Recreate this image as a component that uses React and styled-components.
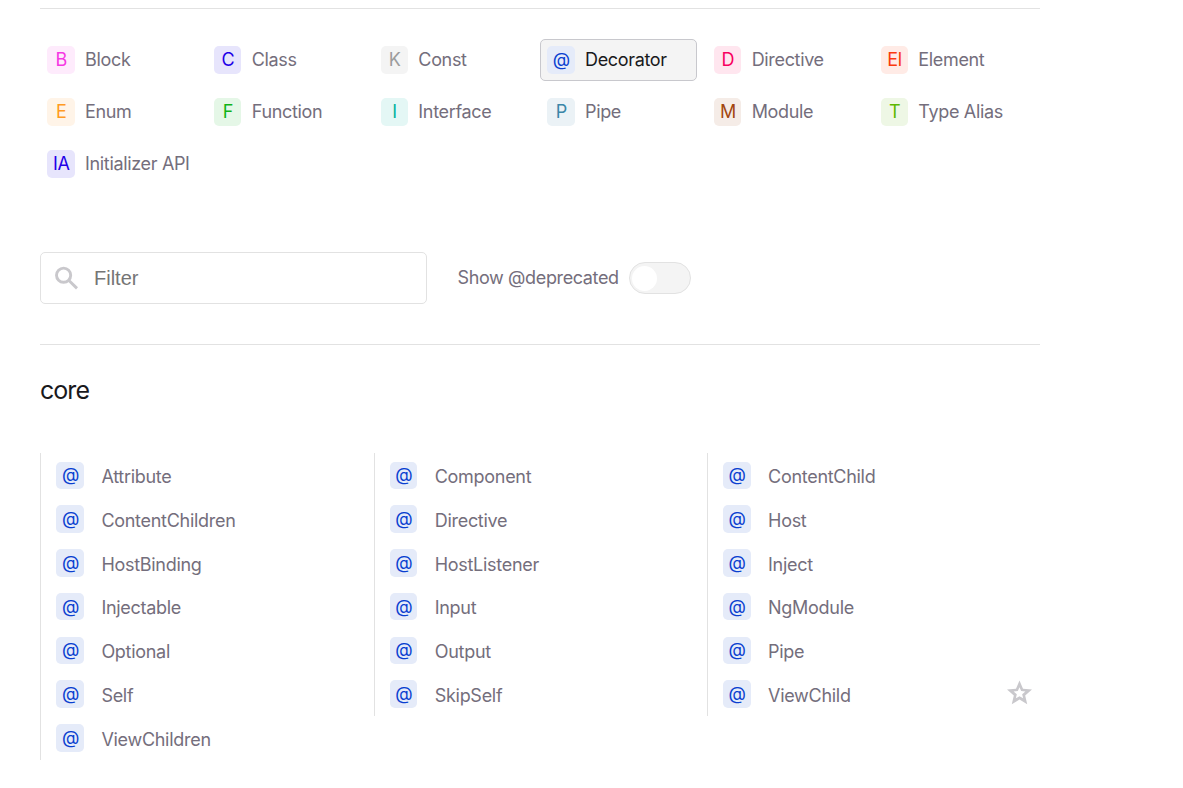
import React from 'react';
import styled, { createGlobalStyle } from 'styled-components';

const GlobalStyle = createGlobalStyle`
  * { box-sizing: border-box; }
  body {
    margin: 0;
    background: #fff;
    color: #746e7c;
    font-family: Inter, sans-serif;
    font-size: 18px;
    line-height: 24px;
    letter-spacing: -0.29px;
  }
`;

const Page = styled.main`
  width: 1000px;
  height: 788px;
  margin-left: 40px;
  padding-top: 8px;
`;

const Filters = styled.section`
  border: solid #e2e2e2;
  border-width: 1px 0;
  padding: 30px 0 40px;
`;

const TypeGrid = styled.ul`
  list-style: none;
  margin: 0 0 67px;
  padding: 0;
  display: grid;
  grid-template-columns: repeat(6, 156.67px);
  gap: 10px;
`;

const TypeItem = styled.li`
  display: flex;
  align-items: center;
  gap: 10.3px;
  height: 42px;
  padding: 0 6.25px;
  border: 1px solid ${(p) => (p.$active ? '#c8c8cd' : 'transparent')};
  border-radius: 5px;
  background: ${(p) => (p.$active ? '#f4f4f4' : 'transparent')};
  color: ${(p) => (p.$active ? '#19191c' : 'inherit')};
  letter-spacing: -0.34px;
  white-space: nowrap;
`;

const Badge = styled.span`
  display: flex;
  flex: none;
  align-items: center;
  justify-content: center;
  width: 27.5px;
  height: 27.5px;
  padding-left: 0.6px;
  border-radius: 5px;
  color: ${(p) => p.$color};
  background: ${(p) => p.$bg};
`;

const Controls = styled.div`
  display: flex;
  align-items: center;
`;

const SearchBox = styled.label`
  display: flex;
  align-items: center;
  width: 387px;
  height: 52px;
  padding-left: 10px;
  border: 1px solid #e2e2e2;
  border-radius: 5px;
`;

const SearchInput = styled.input`
  border: 0;
  outline: 0;
  padding: 0;
  margin-left: 13px;
  width: 300px;
  background: transparent;
  font: 20px "Liberation Sans", Arial, sans-serif;
  &::placeholder { color: #757575; }
`;

const ToggleLabel = styled.span`
  margin-left: 30.5px;
  width: 171.5px;
  letter-spacing: -0.37px;
`;

const Toggle = styled.span`
  display: flex;
  align-items: center;
  width: 62px;
  height: 32px;
  padding-left: 2px;
  border: 1px solid #e2e2e2;
  border-radius: 16px;
  background: #f4f4f4;
`;

const Knob = styled.span`
  width: 25px;
  height: 25px;
  border-radius: 50%;
  background: #fff;
`;

const Heading = styled.h2`
  margin: 30px 0 47.3px;
  height: 31px;
  line-height: 31px;
  color: #19191c;
  font-size: 25px;
  font-weight: 400;
  letter-spacing: -0.95px;
`;

const ApiGrid = styled.ul`
  list-style: none;
  margin: 0 -0.4px 0 0.4px;
  padding: 0;
  display: grid;
  grid-template-columns: repeat(3, 1fr);
`;

const ApiItem = styled.li`
  display: flex;
  align-items: center;
  height: 43.75px;
  padding: 0.35px 6.1px 0 15px;
  border-left: 1px solid #e2e2e2;
`;

const ApiName = styled.span`
  flex: 1;
  margin-left: 17.5px;
  padding-top: 3.5px;
`;

const Star = styled.svg`
  margin-bottom: 1.8px;
`;

const SearchIcon = () => (
  <svg width="30" height="30" viewBox="0 0 30 30" fill="none" stroke="#c9c8cc" strokeWidth="2.9">
    <circle cx="12.6" cy="12.2" r="7.1" />
    <path d="M17.4 17l8.6 8.4" />
  </svg>
);

const StarIcon = () => (
  <Star width="30" height="30" viewBox="-0.4 0 24 24" fill="#c9c8cc" fillRule="evenodd">
    <path d="M12 2l2.81 6.63 7.19.61-5.46 4.73L18.18 21 12 17.27 5.82 21l1.64-7.03L2 9.24l7.19-.61zM12 7.3l1.32 3.14 3.4.28-2.58 2.24.78 3.32L12 14.5l-2.92 1.78.78-3.32-2.58-2.24 3.4-.28z" />
  </Star>
);

const types = [
  ['B', 'Block', '#f637e3', '#feebfc'],
  ['C', 'Class', '#1f00e8', '#e7e5fc'],
  ['K', 'Const', '#9c9c9c', '#f4f4f4'],
  ['@', 'Decorator', '#0a3fd0', '#e5ebf9'],
  ['D', 'Directive', '#f8005f', '#ffe6ef'],
  ['El', 'Element', '#fa3a0e', '#ffebe6'],
  ['E', 'Enum', '#ff9a22', '#fff4e8'],
  ['F', 'Function', '#0fb318', '#e5f7e7'],
  ['I', 'Interface', '#00b29d', '#e4f7f5'],
  ['P', 'Pipe', '#3b86a8', '#ebf2f6'],
  ['M', 'Module', '#a2460f', '#f5ece7'],
  ['T', 'Type Alias', '#5db800', '#eef7e5'],
  ['IA', 'Initializer API', '#1f00e8', '#e7e5fc'],
];

const decorators = [
  'Attribute', 'Component', 'ContentChild', 'ContentChildren', 'Directive', 'Host',
  'HostBinding', 'HostListener', 'Inject', 'Injectable', 'Input', 'NgModule',
  'Optional', 'Output', 'Pipe', 'Self', 'SkipSelf', 'ViewChild', 'ViewChildren',
];

export default function App() {
  return (
    <Page>
      <GlobalStyle />
      <Filters>
        <TypeGrid>
          {types.map(([symbol, label, color, bg]) => (
            <TypeItem key={label} $active={label === 'Decorator'}>
              <Badge $color={color} $bg={bg}>{symbol}</Badge>
              {label}
            </TypeItem>
          ))}
        </TypeGrid>
        <Controls>
          <SearchBox>
            <SearchIcon />
            <SearchInput placeholder="Filter" />
          </SearchBox>
          <ToggleLabel>Show @deprecated</ToggleLabel>
          <Toggle><Knob /></Toggle>
        </Controls>
      </Filters>
      <Heading>core</Heading>
      <ApiGrid>
        {decorators.map((name) => (
          <ApiItem key={name}>
            <Badge $color="#0a3fd0" $bg="#e5ebf9">@</Badge>
            <ApiName>{name}</ApiName>
            {name === 'ViewChild' && <StarIcon />}
          </ApiItem>
        ))}
      </ApiGrid>
    </Page>
  );
}
